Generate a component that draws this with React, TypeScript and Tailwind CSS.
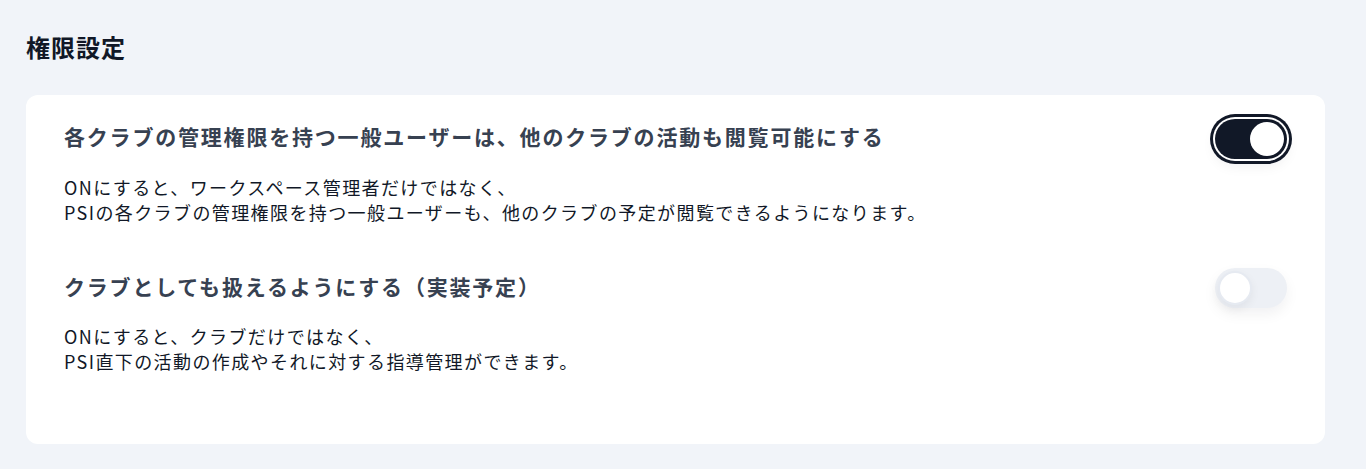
import React, { useState } from 'react';

interface Setting {
  id: string;
  title: string;
  lines: string[];
  enabled: boolean;
}

const initialSettings: Setting[] = [
  {
    id: 'club-view',
    title: '各クラブの管理権限を持つ一般ユーザーは、他のクラブの活動も閲覧可能にする',
    lines: [
      'ONにすると、ワークスペース管理者だけではなく、',
      'PSIの各クラブの管理権限を持つ一般ユーザーも、他のクラブの予定が閲覧できるようになります。',
    ],
    enabled: true,
  },
  {
    id: 'as-club',
    title: 'クラブとしても扱えるようにする（実装予定）',
    lines: ['ONにすると、クラブだけではなく、', 'PSI直下の活動の作成やそれに対する指導管理ができます。'],
    enabled: false,
  },
];

const Toggle: React.FC<{ checked: boolean; onChange: () => void }> = ({ checked, onChange }) => (
  <button
    type="button"
    role="switch"
    aria-checked={checked}
    onClick={onChange}
    className={
      checked
        ? 'relative mt-[6px] flex h-[40px] w-[72px] shrink-0 items-center rounded-full bg-[#111827] p-[3px] shadow-[0_6px_14px_rgba(15,23,42,0.08)] ring-[3px] ring-[#111827] ring-offset-2 ring-offset-white'
        : 'relative mt-[4px] flex h-[40px] w-[72px] shrink-0 items-center rounded-full bg-[#edf0f5] p-[3px] shadow-[0_6px_14px_rgba(15,23,42,0.06)]'
    }
  >
    <span
      className={
        checked
          ? 'ml-auto h-[34px] w-[34px] rounded-full bg-white'
          : 'h-[34px] w-[34px] rounded-full border-2 border-[#e6eaf1] bg-white shadow-[0_4px_10px_rgba(15,23,42,0.06)]'
      }
    />
  </button>
);

export default function App() {
  const [settings, setSettings] = useState<Setting[]>(initialSettings);

  const handleToggle = (id: string) => {
    setSettings((prev) => prev.map((s) => (s.id === id ? { ...s, enabled: !s.enabled } : s)));
  };

  return (
    <div
      className="min-h-[469px] w-full bg-[#f1f4f9] pt-[31px] pr-[41px] pb-[25px] pl-[26px]"
      style={{ fontFamily: '"Noto Sans CJK JP", "Noto Sans", sans-serif' }}
    >
      <h1 className="mb-[32px] text-[24px] leading-8 font-bold tracking-[1px] text-[#111827]">権限設定</h1>

      <div className="flex flex-col gap-[39px] rounded-xl bg-white px-[38px] pt-[18px] pb-[70px]">
        {settings.map((setting) => (
          <div key={setting.id} className="flex flex-col gap-[16px]">
            <div className="flex items-center justify-between">
              <h2 className="text-[21px] leading-[30px] font-bold tracking-[1.8px] text-[#374151]">
                {setting.title}
              </h2>
              <Toggle checked={setting.enabled} onChange={() => handleToggle(setting.id)} />
            </div>
            <p className="text-[18px] leading-[25px] tracking-[1.4px] text-[#111827]">
              {setting.lines.map((line) => (
                <span key={line} className="block">
                  {line}
                </span>
              ))}
            </p>
          </div>
        ))}
      </div>
    </div>
  );
}
